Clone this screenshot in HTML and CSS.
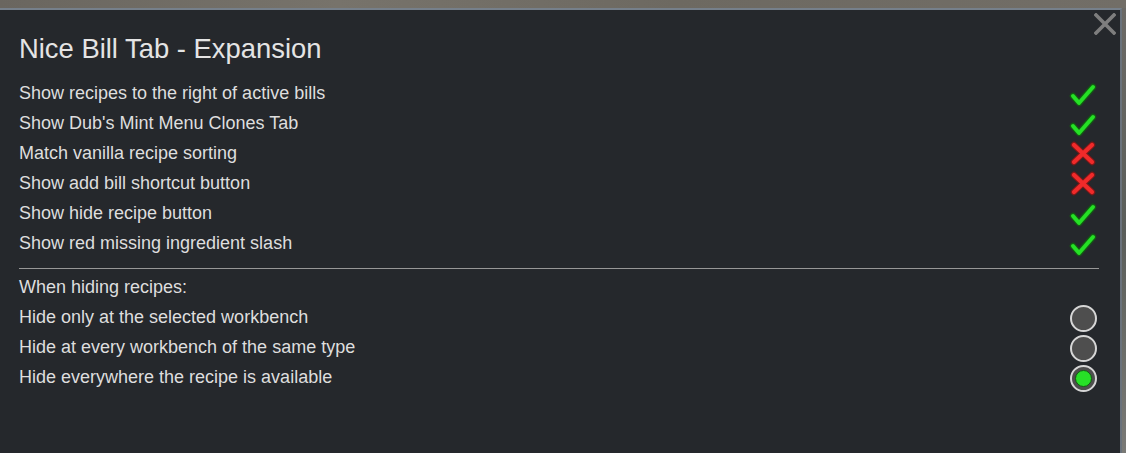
FILE: index.html
```html
<!DOCTYPE html>
<html>
<head>
<meta charset="utf-8">
<link rel="stylesheet" href="styles.css">
</head>
<body>
<div class="topstrip"></div>
<div class="stage">
  <div class="dialog">
    <button class="close" aria-label="Close">
      <svg width="22" height="22" viewBox="0 0 22 22"><path d="M2 2 L20 20 M20 2 L2 20" stroke="#7e7e7e" stroke-width="3.6" stroke-linecap="square"/></svg>
    </button>
    <h1 class="title">Nice Bill Tab - Expansion</h1>
    <div class="rows">
      <div class="row"><span>Show recipes to the right of active bills</span><span class="icon"><svg width="28" height="28" viewBox="0 0 28 28"><polyline class="ck-o" points="4,16 10,23 24,7"/><polyline class="ck-i" points="4,16 10,23 24,7"/></svg></span></div>
      <div class="row"><span>Show Dub's Mint Menu Clones Tab</span><span class="icon"><svg width="28" height="28" viewBox="0 0 28 28"><polyline class="ck-o" points="4,16 10,23 24,7"/><polyline class="ck-i" points="4,16 10,23 24,7"/></svg></span></div>
      <div class="row"><span>Match vanilla recipe sorting</span><span class="icon"><svg width="28" height="28" viewBox="0 0 28 28"><path class="x-o" d="M5 5 L23 22 M23 5 L5 22"/><path class="x-i" d="M5 5 L23 22 M23 5 L5 22"/></svg></span></div>
      <div class="row"><span>Show add bill shortcut button</span><span class="icon"><svg width="28" height="28" viewBox="0 0 28 28"><path class="x-o" d="M5 5 L23 22 M23 5 L5 22"/><path class="x-i" d="M5 5 L23 22 M23 5 L5 22"/></svg></span></div>
      <div class="row"><span>Show hide recipe button</span><span class="icon"><svg width="28" height="28" viewBox="0 0 28 28"><polyline class="ck-o" points="4,16 10,23 24,7"/><polyline class="ck-i" points="4,16 10,23 24,7"/></svg></span></div>
      <div class="row"><span>Show red missing ingredient slash</span><span class="icon"><svg width="28" height="28" viewBox="0 0 28 28"><polyline class="ck-o" points="4,16 10,23 24,7"/><polyline class="ck-i" points="4,16 10,23 24,7"/></svg></span></div>
    </div>
    <hr class="sep">
    <div class="rows">
      <div class="row"><span>When hiding recipes:</span></div>
      <div class="row"><span>Hide only at the selected workbench</span><span class="icon"><span class="radio"></span></span></div>
      <div class="row"><span>Hide at every workbench of the same type</span><span class="icon"><span class="radio"></span></span></div>
      <div class="row"><span>Hide everywhere the recipe is available</span><span class="icon"><span class="radio on"><span class="dot"></span></span></span></div>
    </div>
  </div>
  <div class="rightstrip"></div>
</div>
</body>
</html>
```

FILE: styles.css
```css
html, body {
  margin: 0;
  padding: 0;
  height: 100%;
}
body {
  background: #5f5d58;
  font-family: "Liberation Sans", Arial, sans-serif;
  display: flex;
  flex-direction: column;
  overflow: hidden;
}
.topstrip {
  height: 8px;
  flex: none;
  background: linear-gradient(90deg, #6a665f 0%, #77736b 30%, #6d6961 60%, #726e67 100%);
}
.stage {
  flex: 1;
  display: flex;
}
.rightstrip {
  width: 4px;
  flex: none;
  background: linear-gradient(180deg, #6c6a66 0%, #5a5e5a 50%, #7a7a76 100%);
}
.dialog {
  position: relative;
  flex: 1;
  background: #25282c;
  border-top: 2px solid #76808b;
  border-right: 2px solid #6a727b;
  padding: 24px 21px 0 19px;
  color: #dedede;
}
.close {
  position: absolute;
  top: 3px;
  right: 4px;
  width: 22px;
  height: 22px;
  padding: 0;
  border: 0;
  background: none;
  display: block;
}
.close svg { display: block; }
.title {
  margin: 0 0 14px 0;
  font-weight: normal;
  font-size: 27.4px;
  line-height: 30px;
  color: #e4e4e4;
}
.rows {
  display: flex;
  flex-direction: column;
}
.row {
  height: 30px;
  font-size: 18px;
  line-height: 30px;
  display: flex;
  justify-content: space-between;
  align-items: flex-start;
}
.icon {
  width: 28px;
  height: 28px;
  margin-top: 2px;
  margin-right: 2px;
  display: flex;
  align-items: center;
  justify-content: center;
}
.icon svg { display: block; }
.ck-o {
  fill: none;
  stroke: #135a13;
  stroke-width: 6.5;
  stroke-linecap: round;
  stroke-linejoin: round;
}
.ck-i {
  fill: none;
  stroke: #25e025;
  stroke-width: 4;
  stroke-linecap: round;
  stroke-linejoin: round;
}
.x-o {
  fill: none;
  stroke: #7a1818;
  stroke-width: 6.5;
  stroke-linecap: round;
}
.x-i {
  fill: none;
  stroke: #f02a2a;
  stroke-width: 4.2;
  stroke-linecap: round;
}
.sep {
  margin: 10px 0 3px 0;
  border: 0;
  height: 1px;
  background: #979797;
}
.radio {
  width: 23px;
  height: 23px;
  border: 2px solid #d6d6d6;
  border-radius: 50%;
  background: #4e4e4e;
  display: flex;
  align-items: center;
  justify-content: center;
  box-sizing: content-box;
}
.radio .dot {
  width: 15px;
  height: 15px;
  border-radius: 50%;
  background: #27e027;
  border: 1px solid #145a14;
}
```
